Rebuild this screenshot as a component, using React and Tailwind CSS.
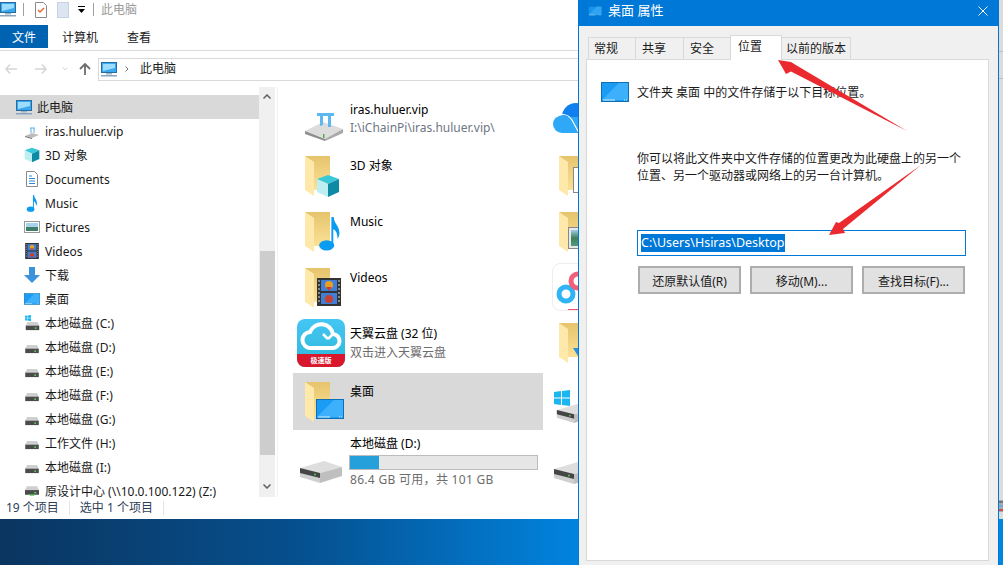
import React from "react";

const FONT = { fontFamily: '"Noto Sans", "Noto Sans CJK SC", sans-serif' };

const treeItems = [
  ["iras.huluer.vip", "net"],
  ["3D 对象", "cube"],
  ["Documents", "doc"],
  ["Music", "note"],
  ["Pictures", "pic"],
  ["Videos", "film"],
  ["下载", "down"],
  ["桌面", "desk"],
  ["本地磁盘 (C:)", "win"],
  ["本地磁盘 (D:)", "drive"],
  ["本地磁盘 (E:)", "drive"],
  ["本地磁盘 (F:)", "drive"],
  ["本地磁盘 (G:)", "drive"],
  ["工作文件 (H:)", "drive"],
  ["本地磁盘 (I:)", "drive"],
  ["原设计中心 (\\\\10.0.100.122) (Z:)", "netdrive"],
];

const PcIcon = ({ className }) => (
  <svg viewBox="0 0 16 15" className={className}>
    <rect x="0.5" y="0.5" width="15" height="10" fill="#38a8f0" stroke="#2b6c9e" />
    <path d="M2 2h12v4L2 9z" fill="#9bdcff" />
    <rect x="5" y="11" width="6" height="1.5" fill="#9db4c6" />
    <rect x="0" y="13" width="16" height="1.5" fill="#8aa5bb" />
  </svg>
);

const DeskIcon = ({ className }) => (
  <svg viewBox="0 0 28 20" className={className}>
    <rect x="0.5" y="0.5" width="27" height="19" fill="#1a9cf5" stroke="#0f6fb5" />
    <path d="M1 18L18 1h9v17z" fill="#3cb0fb" />
    <path d="M2 18h12M23 18h1M25 18h1" stroke="#d5eefc" strokeWidth="1" />
  </svg>
);

const CubeIcon = ({ className }) => (
  <svg viewBox="0 0 24 24" className={className}>
    <path d="M12 1l11 4-11 5L1 5z" fill="#38c8d8" />
    <path d="M1 5l11 5v13L1 18z" fill="#bdeff2" />
    <path d="M23 5l-11 5v13l11-5z" fill="#0f8aa4" />
  </svg>
);

const NoteIcon = ({ className }) => (
  <svg viewBox="0 0 22 36" className={className}>
    <ellipse cx="8" cy="30" rx="8" ry="5.5" fill="#0a9cf0" />
    <path d="M13 0h2.5c0 7 6 9 6 17 0 3-1 5-2 6 0-6-2-9-4.500-10v17h-2z" fill="#0a9cf0" />
  </svg>
);

const FilmIcon = ({ className }) => (
  <svg viewBox="0 0 24 28" className={className}>
    <rect width="24" height="28" fill="#333" />
    <rect x="4" y="2" width="16" height="11" fill="#3f7fd8" />
    <rect x="4" y="15" width="16" height="11" fill="#3f7fd8" />
    <circle cx="12" cy="7" r="4" fill="#e8a020" />
    <path d="M9 9h6l-3 4z" fill="#c84030" />
    <circle cx="12" cy="21" r="4" fill="#c84030" />
    <path d="M1 3h2M1 7h2M1 11h2M1 15h2M1 19h2M1 23h2M21 3h2M21 7h2M21 11h2M21 15h2M21 19h2M21 23h2" stroke="#ddd" />
  </svg>
);

// 大图标里的文件夹，overlay 叠在右下角
const Folder = ({ children }) => (
  <div className="relative w-[25px] h-[40px] shrink-0">
    <div className="absolute left-0 top-0 w-[25px] h-[34px] bg-gradient-to-b from-[#e6c46c] to-[#fbe196]" />
    <svg viewBox="0 0 25 40" className="absolute left-0 top-0 w-[25px] h-[40px]">
      <path d="M0 0l9 6v34l-9-6z" fill="#ffe9aa" />
    </svg>
    {children}
  </div>
);

const Hdd = ({ className }) => (
  <svg viewBox="0 0 42 22" className={className}>
    <path d="M0 7L24 0l18 6-22 6z" fill="#dedede" />
    <path d="M20 12L42 6v9l-22 7z" fill="#bfbfbf" />
    <path d="M0 7l20 5v10L0 16z" fill="#cfcfcf" />
    <path d="M0 7l20 5v5L0 12z" fill="#454545" />
    <circle cx="15" cy="13.500" r="1" fill="#47d147" />
  </svg>
);

const SmallDrive = ({ className, green }) => (
  <svg viewBox="0 0 15 10" className={className}>
    <path d="M2 0h11l2 4H0z" fill="#cfcfcf" />
    <rect y="4" width="15" height="5" fill="#4b4b4b" />
    <rect x="10" y="6" width="2" height="1.500" fill="#5fe05f" />
    {green && <rect x="5" y="8.500" width="5" height="1.500" fill="#44c044" />}
  </svg>
);

const WinLogo = ({ className }) => (
  <svg viewBox="0 0 16 16" className={className}>
    <path d="M0 2l7-1v6.500H0zM8 1l8-1v7.500H8zM0 8.500h7V15l-7-1zM8 8.500h8V16l-8-1z" fill="#19b6f0" />
  </svg>
);

const TreeIcon = ({ type }) => {
  if (type === "net")
    return (
      <svg viewBox="0 0 14 12" className="w-[14px] h-[12px] mt-1">
        <path d="M0 9l7-3 7 2-7 3z" fill="#bdbdbd" />
        <path d="M0 9l7 2v1L0 10z" fill="#707070" />
        <path d="M5 1h5M6 1v5M9 1v5" stroke="#5bb0e8" fill="none" />
      </svg>
    );
  if (type === "cube") return <CubeIcon className="w-[16px] h-[16px]" />;
  if (type === "doc")
    return (
      <svg viewBox="0 0 12 16" className="w-[12px] h-[16px]">
        <path d="M.5.500h8l3 3v12H.5z" fill="#fff" stroke="#8a8a8a" />
        <path d="M3 5h3M3 7.500h6M3 10h6M3 12.500h6" stroke="#2b88d8" />
      </svg>
    );
  if (type === "note") return <NoteIcon className="w-[12px] h-[17px]" />;
  if (type === "pic")
    return (
      <svg viewBox="0 0 16 12" className="w-[16px] h-[12px]">
        <rect x=".5" y=".5" width="15" height="11" fill="#fff" stroke="#999" />
        <rect x="2" y="2" width="12" height="4" fill="#a8d3ee" />
        <rect x="2" y="6" width="12" height="4" fill="#3f7f6a" />
      </svg>
    );
  if (type === "film") return <FilmIcon className="w-[14px] h-[16px]" />;
  if (type === "down")
    return (
      <svg viewBox="0 0 16 16" className="w-[16px] h-[16px]">
        <path d="M5 0h6v8h5l-8 8-8-8h5z" fill="#3b93dc" />
      </svg>
    );
  if (type === "desk") return <DeskIcon className="w-[16px] h-[12px]" />;
  if (type === "win")
    return (
      <div className="relative w-[15px] h-[16px]">
        <WinLogo className="absolute left-0 top-0 w-[6px] h-[6px]" />
        <SmallDrive className="absolute bottom-0 w-[15px] h-[9px]" />
      </div>
    );
  if (type === "netdrive") return <SmallDrive green className="w-[14px] h-[10px]" />;
  return <SmallDrive className="w-[14px] h-[9px] mt-1" />;
};

const Tile = ({ icon, title, sub, selected, className = "", textClass = "" }) => (
  <div className={`flex w-[250px] overflow-hidden ${selected ? "bg-[#d9d9d9]" : ""} ${className}`}>
    <div className="w-[57px] shrink-0">{icon}</div>
    <div className={`text-[12px] leading-[18px] ${textClass}`}>
      <div className="text-black whitespace-nowrap">{title}</div>
      {sub && <div className="text-[#6d6d6d] whitespace-nowrap">{sub}</div>}
    </div>
  </div>
);

const FolderSlot = ({ children }) => (
  <div className="pl-3 pt-[9px]">
    <Folder>{children}</Folder>
  </div>
);

const Explorer = () => (
  <div className="absolute left-0 top-0 w-[579px] h-[519px] bg-white flex flex-col text-[12px] text-[#1a1a1a] overflow-hidden">
    <div className="h-[25px] flex items-center shrink-0 pb-[6px]">
      <PcIcon className="w-[16px] h-[15px]" />
      <div className="w-px h-[13px] bg-[#a0a0a0] ml-[7px]" />
      <svg viewBox="0 0 12 16" className="w-[12px] h-[16px] ml-[11px]">
        <path d="M.5.500h8l3 3v12H.5z" fill="#fff" stroke="#8a8a8a" />
        <path d="M3 8l2 2 4-4" fill="none" stroke="#e8622a" strokeWidth="1.300" />
      </svg>
      <div className="w-[12px] h-[16px] ml-[10px] bg-[#dde5f2] border border-[#c6d2e4]" />
      <svg viewBox="0 0 7 7" className="w-[7px] h-[7px] ml-[9px]">
        <path d="M0 0h7v1H0zM0 3h7L3.500 7z" fill="#000" />
      </svg>
      <div className="w-px h-[13px] bg-[#a0a0a0] ml-[8px]" />
      <span className="ml-[7px] text-[#9a9a9a]">此电脑</span>
    </div>
    <div className="h-[23px] flex items-center shrink-0">
      <div className="w-[48px] h-[23px] bg-[#0063b1] text-white flex items-center justify-center pt-[2px]">文件</div>
      <div className="ml-[14px] w-[36px] text-center pt-[2px]">计算机</div>
      <div className="ml-[29px] w-[24px] text-center pt-[2px]">查看</div>
    </div>
    <div className="h-[3px] shrink-0 border-b border-[#dadbdc]" />
    <div className="h-[36px] flex items-center shrink-0">
      <svg viewBox="0 0 12 10" className="w-[12px] h-[10px] ml-[5px]">
        <path d="M5 .5L1 5l4 4.500M1 5h11" fill="none" stroke="#d5d5d5" strokeWidth="1.500" />
      </svg>
      <svg viewBox="0 0 12 10" className="w-[12px] h-[10px] ml-[18px]">
        <path d="M7 .5L11 5 7 9.500M11 5H0" fill="none" stroke="#d5d5d5" strokeWidth="1.500" />
      </svg>
      <svg viewBox="0 0 6 4" className="w-[6px] h-[4px] ml-[15px]">
        <path d="M.5.500L3 3 5.500.5" fill="none" stroke="#d5d5d5" />
      </svg>
      <svg viewBox="0 0 12 12" className="w-[12px] h-[12px] ml-[11px]">
        <path d="M1 6l5-5 5 5M6 1v11" fill="none" stroke="#6e6e6e" strokeWidth="1.800" />
      </svg>
      <div className="ml-[7px] h-[23px] flex-1 border border-[#d9d9d9] flex items-center">
        <PcIcon className="w-[16px] h-[15px] ml-[2px]" />
        <svg viewBox="0 0 4 6" className="w-[4px] h-[6px] ml-[8px]">
          <path d="M.5.500L3 3 .5 5.500" fill="none" stroke="#707070" />
        </svg>
        <span className="ml-[11px]">此电脑</span>
      </div>
    </div>
    <div className="flex-1 flex min-h-0">
      <div className="w-[259px] shrink-0 pt-[8px]">
        <div className="h-[24px] bg-[#d9d9d9] flex items-center pl-[16px]">
          <PcIcon className="w-[16px] h-[15px]" />
          <span className="ml-[5px] pt-px">此电脑</span>
        </div>
        {treeItems.map(([label, type]) => (
          <div key={label} className="h-[24px] flex items-center">
            <div className="w-[45px] pl-[24px] pr-[5px] flex justify-center shrink-0">
              <TreeIcon type={type} />
            </div>
            <span className="whitespace-nowrap pt-px">{label}</span>
          </div>
        ))}
      </div>
      <div className="w-[16px] shrink-0 bg-[#f0f0f0] flex flex-col items-center">
        <svg viewBox="0 0 8 5" className="w-[8px] h-[5px] mt-[7px] shrink-0">
          <path d="M.5 4.500L4 1l3.500 3.500" fill="none" stroke="#606060" strokeWidth="1.500" />
        </svg>
        <div className="w-[15px] h-[204px] bg-[#cdcdcd] mt-[152px] shrink-0" />
        <svg viewBox="0 0 8 5" className="w-[8px] h-[5px] mt-[29px] shrink-0">
          <path d="M.5.500L4 4l3.500-3.500" fill="none" stroke="#606060" strokeWidth="1.500" />
        </svg>
      </div>
      <div className="w-[2px] shrink-0" />
      <div className="w-px shrink-0 bg-[#f2f2f2]" />
      <div className="flex-1 pl-[15px] pt-[4px] overflow-hidden">
        <div className="grid grid-cols-[250px_250px] grid-rows-[56px_56px_56px_56px_58px_57px_58px] w-[500px]">
          <Tile
            icon={
              <svg viewBox="0 0 38 40" className="ml-[12px] mt-[10px] w-[38px] h-[40px]">
                <path d="M0 30L18 21l20 7-18 10z" fill="#dcdcdc" />
                <path d="M20 38l18-10v4L20 40z" fill="#a8a8a8" />
                <path d="M0 30l20 8v2L0 33z" fill="#8e8e8e" />
                <rect x="18" y="33" width="1.500" height="4" fill="#47b847" />
                <path d="M12 12h17v3H12zM15 15h3v9l-3 1zM23 15h3v11h-3z" fill="#5bb8f0" />
              </svg>
            }
            title="iras.huluer.vip"
            sub={<span className="text-[#6d7683]">I:\iChainPi\iras.huluer.vip\</span>}
            textClass="pt-[10px]"
          />
          <div className="pl-[10px] overflow-hidden h-[56px]">
            <svg viewBox="0 0 36 30" className="mt-[12px] w-[36px] h-[30px]">
              <circle cx="23" cy="14" r="14" fill="#0f80ee" />
              <circle cx="9" cy="21" r="9" fill="#30a8f8" />
              <rect x="9" y="14" width="27" height="16" fill="#30a8f8" />
              <path d="M3 14c6-4 12-3 16 3l7 13" fill="none" stroke="#fff" strokeWidth="1.200" />
            </svg>
          </div>
          <Tile icon={<FolderSlot><CubeIcon className="absolute left-[11px] top-[18px] w-[24px] h-[24px]" /></FolderSlot>} title="3D 对象" textClass="pt-[10px]" />
          <div className="pl-[16px] pt-[9px]">
            <Folder>
              <div className="absolute left-[14px] top-[11px] w-[14px] h-[26px] bg-white border border-[#888]" />
            </Folder>
          </div>
          <Tile icon={<FolderSlot><NoteIcon className="absolute left-[14px] top-[5px] w-[21px] h-[34px]" /></FolderSlot>} title="Music" textClass="pt-[10px]" />
          <div className="pl-[16px] pt-[9px]">
            <Folder>
              <div className="absolute left-[10px] top-[16px] w-[20px] h-[20px] border-2 border-[#e8e8e8] outline outline-[#888] bg-gradient-to-b from-[#9fcfe8] via-[#3f7f5a] to-[#4f9a80]" />
            </Folder>
          </div>
          <Tile icon={<FolderSlot><FilmIcon className="absolute left-[12px] top-[10px] w-[24px] h-[28px]" /></FolderSlot>} title="Videos" textClass="pt-[10px]" />
          <div className="pl-[9px] pt-[4px]">
            <div className="relative w-[48px] h-[48px] rounded-[8px] border border-[#eeeeee] bg-white overflow-hidden">
              <svg viewBox="0 0 48 48" className="absolute left-0 top-0 w-[48px] h-[48px]">
                <circle cx="13" cy="30" r="7" fill="none" stroke="#2fb4f5" strokeWidth="5" />
                <circle cx="25" cy="17" r="7" fill="none" stroke="#f0607a" strokeWidth="5" />
                <path d="M25 10a7 7 0 0 1 7 7" fill="none" stroke="#2fb4f5" strokeWidth="5" />
                <rect x="15" y="45" width="18" height="3" fill="#f0506a" />
              </svg>
            </div>
          </div>
          <Tile
            icon={
              <div className="relative ml-[4px] mt-[4px] w-[48px] h-[48px] rounded-[8px] overflow-hidden bg-gradient-to-b from-[#44c6f4] to-[#2db8d8]">
                <svg viewBox="0 0 48 36" className="absolute left-0 top-0 w-[48px] h-[36px]">
                  <path d="M14 29a8 8 0 0 1-1-16 12 12 0 0 1 23 2 7 7 0 0 1-1 14z" fill="none" stroke="#fff" strokeWidth="4" />
                  <path d="M26 15l5 5m0 0l4-4" fill="none" stroke="#fff" strokeWidth="2.500" />
                </svg>
                <div className="absolute left-0 right-0 bottom-0 h-[13px] bg-[#d9182e] text-white text-[7px] leading-[13px] text-center font-bold">极速版</div>
              </div>
            }
            title="天翼云盘 (32 位)"
            sub={<span className="relative top-[1px]">双击进入天翼云盘</span>}
            textClass="pt-[10px]"
          />
          <div className="pl-[16px] pt-[8px]">
            <Folder>
              <svg viewBox="0 0 10 8" className="absolute left-[14px] top-[25px] w-[10px] h-[8px]">
                <path d="M0 0h10L5 8z" fill="#2f8fdc" />
              </svg>
            </Folder>
          </div>
          <Tile selected icon={<FolderSlot><DeskIcon className="absolute left-[11px] top-[17px] w-[28px] h-[20px]" /></FolderSlot>} title="桌面" textClass="pt-[10px]" />
          <div className="pl-[11px] pt-[17px]">
            <div className="relative w-[42px] h-[33px]">
              <WinLogo className="absolute left-0 top-0 w-[16px] h-[16px]" />
              <Hdd className="absolute left-0 bottom-0 w-[42px] h-[19px]" />
            </div>
          </div>
          <Tile
            icon={<div className="pl-[7px] pt-[31px]"><Hdd className="w-[42px] h-[22px]" /></div>}
            title="本地磁盘 (D:)"
            sub={
              <div className="mt-[2px] -ml-px">
                <div className="w-[189px] h-[15px] bg-[#e6e6e6] border border-[#bcbcbc]">
                  <div className="w-[29px] h-full bg-[#26a0da]" />
                </div>
                <div className="mt-[3px] ml-px leading-[14px] tracking-[0.3px]">86.4 GB 可用，共 101 GB</div>
              </div>
            }
            textClass="pt-[5px]"
          />
          <div className="pl-[11px] pt-[32px]">
            <Hdd className="w-[42px] h-[22px]" />
          </div>
        </div>
      </div>
    </div>
    <div className="h-[22px] shrink-0 flex items-center text-[#2f4058]">
      <span className="ml-[6px]">19 个项目</span>
      <div className="w-px h-[14px] bg-[#e5e5e5] ml-[10px]" />
      <span className="ml-[10px]">选中 1 个项目</span>
      <div className="w-px h-[14px] bg-[#e5e5e5] ml-[10px]" />
    </div>
  </div>
);

const Tab = ({ label, width, active }) => (
  <div
    className={`flex items-center border-t border-x border-[#d9d9d9] -ml-px first:ml-0 first:pl-[5px] last:pl-[4px] ${
      active ? "h-[25px] bg-white relative z-10 -mb-px pl-[7px] pb-[2px]" : "h-[22px] bg-[#f0f0f0] pl-[6px]"
    }`}
    style={{ width }}
  >
    {label}
  </div>
);

const DialogButton = ({ label }) => (
  <div className="w-[103px] h-[28px] bg-[#e1e1e1] border-2 border-[#adadad] flex items-center justify-center whitespace-nowrap pt-[3px]">
    {label}
  </div>
);

const Dialog = () => (
  <div className="absolute left-[578px] top-0 w-[421px] h-[565px] bg-[#f0f0f0] border-x border-[#0078d7] flex flex-col text-[12px] text-[#1a1a1a]">
    <div className="h-[26px] bg-[#0078d7] shrink-0 flex items-center text-white text-[13px] -mx-px pb-[5px]">
      <DeskIcon className="w-[14px] h-[10px] ml-[10px] opacity-80" />
      <span className="ml-[6px]">桌面 属性</span>
      <svg viewBox="0 0 10 10" className="w-[10px] h-[10px] ml-auto mr-[11px]">
        <path d="M.5.5l9 9M9.500.5l-9 9" stroke="#fff" strokeWidth="1" />
      </svg>
    </div>
    <div className="flex items-end h-[33px] pl-[9px] shrink-0">
      <Tab label="常规" width={48} />
      <Tab label="共享" width={49} />
      <Tab label="安全" width={48} />
      <Tab label="位置" width={52} active />
      <Tab label="以前的版本" width={70} />
    </div>
    <div className="ml-[7px] mr-[9px] h-[502px] bg-white border border-[#d9d9d9] shrink-0 pl-[14px]">
      <div className="flex items-center mt-[22px]">
        <DeskIcon className="w-[28px] h-[20px]" />
        <span className="ml-[8px] pt-[2px]">文件夹 桌面 中的文件存储于以下目标位置。</span>
      </div>
      <div className="ml-[36px] mt-[48px] w-[330px] leading-[17px]">
        你可以将此文件夹中文件存储的位置更改为此硬盘上的另一个位置、另一个驱动器或网络上的另一台计算机。
      </div>
      <div className="ml-[36px] mt-[46px] w-[329px] h-[26px] border border-[#0078d7] flex items-center pl-[3px] text-[12.5px]">
        <span className="bg-[#0078d7] text-white leading-[18px]">C:\Users\Hsiras\Desktop</span>
      </div>
      <div className="ml-[37px] mt-[10px] flex gap-[9px]">
        <DialogButton label="还原默认值(R)" />
        <DialogButton label="移动(M)..." />
        <DialogButton label="查找目标(F)..." />
      </div>
    </div>
  </div>
);

// 对话框右侧露出的另一个窗口
const BehindWindow = () => (
  <div className="absolute left-[999px] top-0 w-[4px] h-[519px] bg-[#dcdcdc] flex flex-col">
    <div className="h-[52px] border-b border-[#bdbdbd] shrink-0" />
    <div className="h-[27px] border-b border-[#bdbdbd] shrink-0" />
    <div className="h-[421px] shrink-0" />
    <div className="h-[4px] bg-[#777] border-y border-[#aaa] shrink-0" />
    <div className="h-[4px] bg-[#7aa6d8] border-y border-[#aaa] shrink-0" />
    <div className="h-[4px] bg-[#d84a4a] border-y border-[#aaa] shrink-0" />
  </div>
);

export default function App() {
  return (
    <div
      style={FONT}
      className="relative w-[1003px] h-[565px] overflow-hidden bg-gradient-to-r from-[#0a3560] via-[#05508f] via-30% to-[#0085e0] to-[58%]"
    >
      <Explorer />
      <BehindWindow />
      <Dialog />
      {/* 红色标注箭头 */}
      <svg viewBox="0 0 1003 565" className="absolute left-0 top-0 w-[1003px] h-[565px] pointer-events-none">
        <path d="M778 60L791 62 795 64.500 907 131 791 71.500 786 74z" fill="#ea2a2f" />
        <path d="M829 235L836 222 839 223 921 165 843 229 845 233z" fill="#ea2a2f" />
      </svg>
    </div>
  );
}
